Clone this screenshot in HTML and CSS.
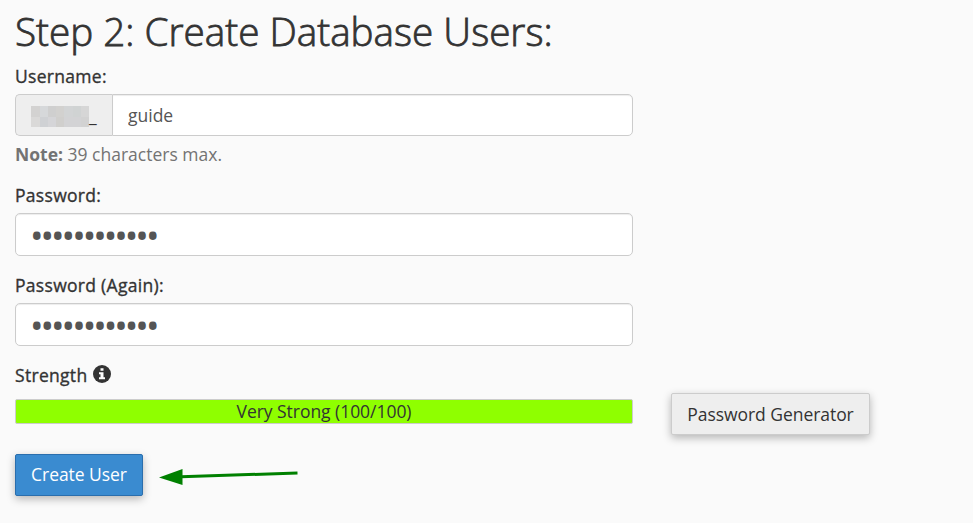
FILE: index.html
```html
<!DOCTYPE html>
<html lang="en">
<head>
<meta charset="utf-8">
<title>Create Database Users</title>
<link rel="stylesheet" href="styles.css">
</head>
<body>
<main>
  <h1>Step 2: Create Database Users:</h1>
  <form>
    <label class="label-user" for="user">Username:</label>
    <div class="group">
      <span class="prefix">
        <svg class="mosaic" width="58" height="21" viewBox="0 0 58 21" shape-rendering="crispEdges" aria-hidden="true">
          <rect width="58" height="21" fill="#d4d4d4"/>
          <rect width="9" height="11" fill="#d3d2d1"/><rect x="9" width="8" height="11" fill="#d6d8da"/><rect x="17" width="8" height="11" fill="#cfcfcf"/><rect x="25" width="8" height="11" fill="#d2d1cf"/><rect x="33" width="9" height="11" fill="#d2d4d5"/><rect x="42" width="8" height="11" fill="#d0d3d3"/><rect x="50" width="8" height="11" fill="#d6d6d6"/>
          <rect y="11" width="9" height="10" fill="#dad9d8"/><rect x="9" y="11" width="8" height="10" fill="#cfd1d4"/><rect x="17" y="11" width="8" height="10" fill="#d5d5d8"/><rect x="25" y="11" width="8" height="10" fill="#d0cfcd"/><rect x="33" y="11" width="17" height="10" fill="#d3d3d5"/><rect x="50" y="11" width="8" height="10" fill="#d2d2d2"/>
        </svg><span>_</span>
      </span>
      <input id="user" class="field" type="text" value="guide">
    </div>
    <p class="note"><strong>Note:</strong> <span>39 characters max.</span></p>
    <label class="label-pass" for="pass">Password:</label>
    <input id="pass" class="field secret" type="password" value="abcdefghijkl">
    <label class="label-again" for="again">Password (Again):</label>
    <input id="again" class="field secret" type="password" value="abcdefghijkl">
    <div class="strength"><span>Strength</span>
      <svg width="18" height="18" viewBox="0 0 18 18" aria-hidden="true"><circle cx="9" cy="9" r="9" fill="#333"/><path fill="#fff" d="M7.500 3.200h3v2.600h-3zM6 7.200h4.500v5H12v2H6v-2h1.500v-3H6z"/></svg>
    </div>
    <div class="meter-row">
      <div class="meter">Very Strong (100/100)</div>
      <button class="btn" type="button">Password Generator</button>
    </div>
    <div class="actions">
      <button class="btn primary" type="button">Create User</button>
      <svg class="arrow" width="140" height="18" viewBox="0 0 140 18" aria-hidden="true"><path d="M0 9.500 23.500 1v16z" fill="#008000"/><path d="M22 8.800 138.500 5" stroke="#008000" stroke-width="3"/></svg>
    </div>
  </form>
</main>
</body>
</html>
```
FILE: styles.css
```css
* { box-sizing: border-box; }
body { margin: 0; background: #fafafa; color: #333; font: 17.5px/24px "Open Sans", sans-serif; }
main { height: 523px; padding: 4px 15px 0; }
h1 { margin: 0; font-size: 38.65px; line-height: 54px; font-weight: 300; white-space: nowrap; -webkit-text-stroke: .8px #333; }
form { display: flex; flex-direction: column; width: 618px; }
label, .strength span { letter-spacing: .3px; -webkit-text-stroke: .35px #333; }
.label-user { margin-top: 6px; height: 30px; }
.group { display: flex; height: 42px; }
.prefix { display: flex; align-items: center; width: 97px; padding-left: 15px; background: #eee; border: 1px solid #ccc; border-right: 0; border-radius: 5px 0 0 5px; }
.mosaic { margin-top: 2px; }
.field { width: 100%; height: 43px; margin: 0; padding: 8px 15px; border: 1px solid #ccc; border-radius: 5px; background: #fff; box-shadow: inset 0 1px 1px rgba(0,0,0,.075); color: #555; font: inherit; outline: 0; }
.group .field { flex: 1; height: 42px; border-radius: 0 5px 5px 0; }
.field.secret { padding: 2px 14px 0; font-size: 36px; line-height: 39px; letter-spacing: -3px; }
.note { margin: 6px 0 0; color: #737373; }
.note strong { font-weight: 700; }
.label-pass { margin-top: 17px; height: 30px; }
.label-again { margin-top: 17px; height: 30px; }
.strength { display: flex; gap: 5.5px; margin-top: 17px; }
.strength svg { margin-top: 2px; }
.meter-row { display: flex; align-items: flex-start; width: 855px; margin-top: 6px; }
.meter { width: 618px; height: 25px; margin: 6px 38px 0 0; border: 1px solid #ccc; border-radius: 2px; background: #8fff00; text-align: center; line-height: 23px; letter-spacing: -.04px; }
.btn { height: 42px; padding: 0 15px; border: 1px solid #ccc; border-radius: 2px; background: #eee; box-shadow: 0 3px 8px rgba(0,0,0,.28); color: #333; font: inherit; letter-spacing: -.05px; white-space: nowrap; }
.meter-row .btn { width: 199px; }
.actions { display: flex; gap: 16px; margin-top: 19px; }
.primary { width: 128px; padding-bottom: 2px; background: #3a8bd0; border-color: #2a6ead; color: #fff; }
.arrow { margin-top: 14px; }
```
